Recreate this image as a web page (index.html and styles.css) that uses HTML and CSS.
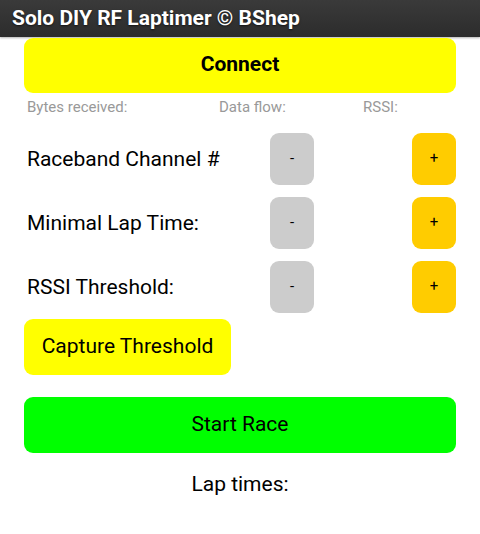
FILE: index.html
```html
<!DOCTYPE html>
<html>
<head>
<meta charset="utf-8">
<link rel="stylesheet" href="styles.css">
</head>
<body>
<header class="titlebar">Solo DIY RF Laptimer © BShep</header>
<main class="content">
  <button class="btn btn-connect">Connect</button>
  <div class="status">
    <span>Bytes received:</span>
    <span>Data flow:</span>
    <span>RSSI:</span>
  </div>
  <div class="setting">
    <span class="setting-label">Raceband Channel #</span>
    <button class="btn btn-small btn-minus">-</button>
    <span></span>
    <button class="btn btn-small btn-plus">+</button>
  </div>
  <div class="setting">
    <span class="setting-label">Minimal Lap Time:</span>
    <button class="btn btn-small btn-minus">-</button>
    <span></span>
    <button class="btn btn-small btn-plus">+</button>
  </div>
  <div class="setting">
    <span class="setting-label">RSSI Threshold:</span>
    <button class="btn btn-small btn-minus">-</button>
    <span></span>
    <button class="btn btn-small btn-plus">+</button>
  </div>
  <div class="capture-row">
    <button class="btn btn-capture">Capture Threshold</button>
  </div>
  <button class="btn btn-start">Start Race</button>
  <div class="laptimes">Lap times:</div>
</main>
</body>
</html>
```
FILE: styles.css
```css
* { box-sizing: border-box; }
html, body { margin: 0; padding: 0; background: #fff; }
body {
  font-family: Roboto, "Noto Sans", sans-serif;
  color: #000;
  width: 480px;
}
.titlebar {
  height: 37px;
  background: linear-gradient(#3a3a3a, #2c2c2c);
  color: #fff;
  font-weight: bold;
  font-size: 21px;
  line-height: 37px;
  padding-left: 12px;
  text-shadow: 0 1px 2px rgba(0,0,0,0.6);
  box-shadow: 0 1px 2px rgba(0,0,0,0.3);
}
.content {
  padding: 1px 24px 0;
  display: flex;
  flex-direction: column;
}
.btn {
  border: none;
  border-radius: 9px;
  font-family: Roboto, "Noto Sans", sans-serif;
  color: #000;
  padding: 0 0 3px;
  margin: 0;
}
.btn-connect {
  height: 55px;
  background: #ffff00;
  font-weight: bold;
  font-size: 21px;
}
.status {
  display: grid;
  grid-template-columns: 192px 144px 1fr;
  padding-left: 3px;
  margin-top: 6px;
  height: 16px;
  line-height: 16px;
  font-size: 15px;
  color: #999;
}
.setting {
  display: grid;
  grid-template-columns: 246px 44px 1fr 44px;
  align-items: center;
  height: 52px;
  margin-top: 12px;
}
.status + .setting { margin-top: 18px; }
.setting-label {
  font-size: 21px;
  padding-left: 3px;
}
.btn-small {
  height: 52px;
  font-size: 15px;
}
.btn-minus { background: #cccccc; }
.btn-plus { background: #ffcc00; }
.capture-row {
  display: flex;
  margin-top: 6px;
}
.btn-capture {
  height: 56px;
  width: 207px;
  background: #ffff00;
  font-size: 21px;
}
.btn-start {
  height: 56px;
  margin-top: 22px;
  background: #00ff00;
  font-size: 21px;
}
.laptimes {
  text-align: center;
  font-size: 21px;
  margin-top: 19px;
  line-height: 24px;
}
```
